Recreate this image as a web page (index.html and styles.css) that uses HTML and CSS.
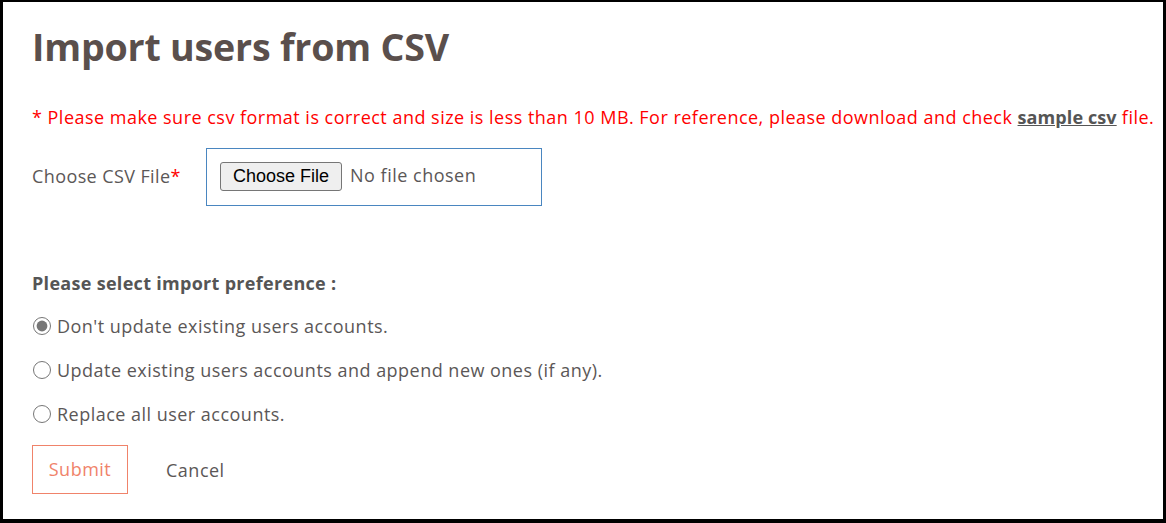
FILE: index.html
```html
<!DOCTYPE html>
<html lang="en">

<head>
    <meta charset="UTF-8">
    <meta name="viewport" content="width=device-width, initial-scale=1.0">
    <title>Import users from CSV</title>
    <link rel="stylesheet" href="styles.css">
</head>

<body>
    <div class="panel">
        <h1 class="title">Import users from CSV</h1>

        <p class="notice">* Please make sure csv format is correct and size is less than 10 MB. For reference, please download and check <a href="javascript:;" class="sample">sample csv</a> file.</p>

        <div class="file-row">
            <label class="file-label" for="csv">Choose CSV File<span class="req">*</span></label>
            <div class="file-box">
                <input type="file" id="csv" class="file-input">
            </div>
        </div>

        <h4 class="pref-title">Please select import preference :</h4>

        <ul class="options">
            <li><label><input type="radio" name="pref" checked> Don't update existing users accounts.</label></li>
            <li><label><input type="radio" name="pref"> Update existing users accounts and append new ones (if any).</label></li>
            <li><label><input type="radio" name="pref"> Replace all user accounts.</label></li>
        </ul>

        <div class="actions">
            <a href="javascript:;" class="btn-submit">Submit</a>
            <a href="javascript:;" class="btn-cancel">Cancel</a>
        </div>
    </div>
</body>

</html>
```

FILE: styles.css
```css
* {
    margin: 0;
    padding: 0;
    box-sizing: border-box;
}

html,
body {
    height: 100%;
}

body {
    font-family: "Open Sans", "Noto Sans", sans-serif;
    color: #5b5757;
    background-color: #fff;
}

.panel {
    height: 523px;
    border: 3px solid #000;
    border-top-width: 2px;
    border-right-width: 3px;
    border-bottom-width: 4px;
    padding: 20px 0 0 29px;
}

.title {
    font-size: 37.6px;
    font-weight: 700;
    color: #5a4f4c;
    line-height: 50px;
    letter-spacing: -0.2px;
}

.notice {
    margin-top: 34px;
    font-size: 18px;
    line-height: 22px;
    color: #ff0000;
    letter-spacing: 0.48px;
    white-space: nowrap;
}

.notice .sample {
    color: #555;
    font-weight: 700;
    text-decoration: underline;
    letter-spacing: 0.1px;
}

.file-row {
    display: flex;
    align-items: flex-start;
    margin-top: 20px;
}

.file-label {
    font-size: 18px;
    line-height: 22px;
    letter-spacing: 0.4px;
    margin-top: 17px;
    width: 174px;
}

.file-label .req {
    color: #ff0000;
}

.file-box {
    width: 336px;
    height: 58px;
    border: 1px solid #4a86c0;
    padding: 13px 0 0 13px;
}

.file-input {
    font-family: "Open Sans", "Noto Sans", sans-serif;
    font-size: 18px;
    letter-spacing: 0.5px;
    color: #5b5757;
}

.file-input::file-selector-button {
    font-family: "Liberation Sans", Arial, sans-serif;
    font-size: 18px;
    letter-spacing: 0;
    color: #000;
    background-color: #efefef;
    border: 1px solid #767676;
    border-radius: 3px;
    padding: 3px 12px;
    margin-right: 8px;
}

.pref-title {
    margin-top: 66px;
    font-size: 18px;
    font-weight: 700;
    line-height: 22px;
    letter-spacing: 0.3px;
    color: #555;
}

.options {
    list-style: none;
    margin-top: 21px;
}

.options li {
    height: 44px;
    font-size: 18px;
    line-height: 22px;
    letter-spacing: 0.48px;
}

.options label {
    display: flex;
    align-items: center;
    gap: 6px;
}

.options input {
    width: 18px;
    height: 18px;
    margin: 0 0 0 1px;
    accent-color: #767676;
}

.actions {
    display: flex;
    align-items: center;
    gap: 38px;
    margin-top: -2px;
}

.btn-submit {
    display: block;
    width: 96px;
    height: 49px;
    line-height: 47px;
    text-align: center;
    border: 1px solid #f0836a;
    color: #f0836a;
    font-size: 18px;
    letter-spacing: 0.5px;
    text-decoration: none;
}

.btn-cancel {
    color: #5b5757;
    font-size: 18px;
    letter-spacing: 0.5px;
    text-decoration: none;
}
```
